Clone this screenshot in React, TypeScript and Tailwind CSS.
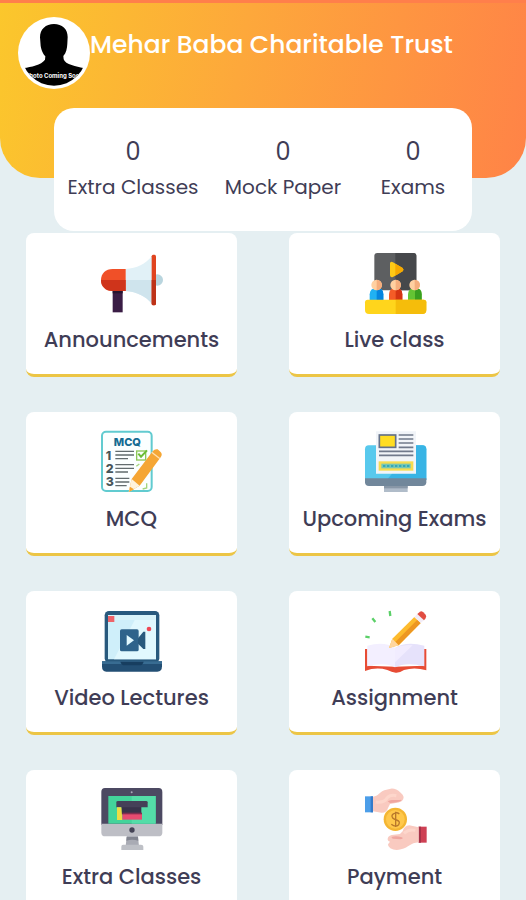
import type { ReactNode } from "react";

interface Stat {
  label: string;
  value: number;
}

interface MenuItem {
  title: string;
  icon: ReactNode;
}

const stats: Stat[] = [
  { label: "Extra Classes", value: 0 },
  { label: "Mock Paper", value: 0 },
  { label: "Exams", value: 0 },
];

function Icon({ children }: { children: ReactNode }) {
  return (
    <svg viewBox="30 30 192 192" className="h-16 w-16" aria-hidden="true">
      {children}
    </svg>
  );
}

function Avatar() {
  return (
    <svg viewBox="0 0 216 216" className="h-[72px] w-[72px]" aria-hidden="true">
      <defs>
        <clipPath id="avatar-clip">
          <circle cx="108" cy="108" r="98" />
        </clipPath>
      </defs>
      <g clipPath="url(#avatar-clip)">
        <path
          d="M108 21C83 21 66 37 66 61L68 87C71 104 77 112 82 118L81 128C70 144 38 150 18 153L0 216H216L196 153C177 149 141 143 137 127L136 117C145 107 147 95 148 80L149 60C149 36 132 21 108 21Z"
          fill="#000"
        />
        <text
          x="109"
          y="184"
          textAnchor="middle"
          fontFamily="Inter, sans-serif"
          fontSize="18"
          fontWeight="700"
          fill="#fff"
        >
          Photo Coming Soon
        </text>
      </g>
    </svg>
  );
}

function MegaphoneIcon() {
  return (
    <Icon>
      <path d="M68 146H98V214H68Z" fill="#3a1d45" />
      <path d="M68 146H98V157H68Z" fill="#26142f" />
      <circle cx="202" cy="117" r="17" fill="#b9d5de" />
      <path d="M107 84C140 82 167 69 186 45V189C168 166 140 153 107 150Z" fill="#e1f1f7" />
      <path d="M107 117H186V189C168 166 140 153 107 150Z" fill="#cfe4ed" />
      <path d="M107 84V150H68C46 150 33 136 33 117S47 84 68 84Z" fill="#f05028" />
      <path d="M33 117H107V150H68C46 150 33 136 33 117Z" fill="#cf341b" />
      <rect x="185" y="41" width="13" height="152" rx="5" fill="#e0441f" />
      <path d="M185 117H198V188Q198 193 191 193T185 188Z" fill="#bd3218" />
    </Icon>
  );
}

function LiveClassIcon() {
  return (
    <Icon>
      <rect x="64" y="36" width="126" height="112" rx="9" fill="#5d5f61" />
      <path d="M127 36H181Q190 36 190 45V148H127Z" fill="#46484b" />
      <path d="M111 67Q112 59 120 64L149 81Q154 86 149 91L120 108Q112 111 111 103Z" fill="#fdc916" />
      <path d="M127 68L149 81Q154 86 149 91L127 104Z" fill="#f5a800" />
      <path d="M50 181V160Q51 141 71 141T91 160V181Z" fill="#21b1f3" />
      <path d="M71 141Q91 141 91 160V181H71Z" fill="#0585df" />
      <path d="M108 181V160Q109 141 128 141T148 160V181Z" fill="#f45c27" />
      <path d="M128 141Q148 141 148 160V181H128Z" fill="#d53512" />
      <path d="M165 181V160Q166 141 186 141T206 160V181Z" fill="#64c433" />
      <path d="M186 141Q206 141 206 160V181H186Z" fill="#399f20" />
      <circle cx="71" cy="132" r="16" fill="#ffd0a1" />
      <circle cx="128" cy="132" r="16" fill="#ffd0a1" />
      <circle cx="185" cy="132" r="16" fill="#ffd0a1" />
      <path d="M71 116A16 16 0 0 1 71 148ZM128 116A16 16 0 0 1 128 148ZM185 116A16 16 0 0 1 185 148Z" fill="#f5ae7d" />
      <path d="M44 176H212Q220 176 220 184V207Q220 219 208 219H48Q36 219 36 207V184Q36 176 44 176Z" fill="#ffd51c" />
      <path d="M128 176H212Q220 176 220 184V207Q220 219 208 219H128Z" fill="#f5bd0b" />
    </Icon>
  );
}

function McqIcon() {
  return (
    <Icon>
      <rect x="36" y="35" width="149" height="178" rx="12" fill="#fbffff" stroke="#61cbd0" strokeWidth="6" />
      <g fontFamily="Inter, sans-serif" fontWeight="800">
        <text x="112" y="77" textAnchor="middle" fontSize="33" fill="#146b92">
          MCQ
        </text>
        <g fontSize="37" fill="#47565a">
          <text x="47" y="119">1</text>
          <text x="47" y="159">2</text>
          <text x="47" y="199">3</text>
        </g>
      </g>
      <path d="M76 94H132M76 105H132M76 116H114M76 134H132M76 145H132M76 156H114M76 175H118M76 186H118M76 197H110" stroke="#626c6e" strokeWidth="4" />
      <rect x="140" y="93" width="27" height="27" fill="none" stroke="#8dc758" strokeWidth="4" />
      <path d="M145 101L153 110L171 91" fill="none" stroke="#6bbd36" strokeWidth="6" />
      <path d="M139 139L148 132M158 207L170 204V190" fill="none" stroke="#a4d57d" strokeWidth="4" />
      <path d="M116 216L125 177L188 94Q194 86 203 88L211 95Q219 102 212 112L149 197Z" fill="#f5a634" />
      <path d="M116 216L125 177L149 197Z" fill="#fff3dc" />
      <path d="M117 216L120 200L132 208Z" fill="#f5a634" />
      <path d="M185 97L210 116" stroke="#ffe1af" strokeWidth="4" />
    </Icon>
  );
}

function ExamIcon() {
  return (
    <Icon>
      <path d="M93 197H164V216H93Z" fill="#b0bcc9" />
      <path d="M93 197H164V205H93Z" fill="#8897a7" />
      <path d="M47 76H208Q220 76 220 88V180H36V88Q36 76 47 76Z" fill="#58c9ed" />
      <path d="M190 76H208Q220 76 220 88V180H101Z" fill="#38b4e5" />
      <path d="M36 175H220V187Q220 198 208 198H48Q36 198 36 187Z" fill="#71879b" />
      <path d="M69 34H189V161H69Z" fill="#f1f4f8" />
      <rect x="79" y="45" width="49" height="37" fill="#ffdd22" stroke="#647188" strokeWidth="5" />
      <path d="M137 45H181M137 57H181M137 69H181M137 82H181M78 94H181M78 106H181" stroke="#70798b" strokeWidth="5" />
      <rect x="77" y="124" width="104" height="28" fill="#f7dc4f" />
      <rect x="85" y="131" width="88" height="14" fill="#76c7b4" />
      <path d="M90 138H169" stroke="#37a9b6" strokeWidth="6" strokeDasharray="7 5" />
    </Icon>
  );
}

function VideoIcon() {
  return (
    <Icon>
      <rect x="44" y="36" width="164" height="155" rx="13" fill="#28597d" />
      <path d="M54 48H198V181H54Z" fill="#cfeffa" />
      <path d="M142 48H198V181H72Z" fill="#e1f8fe" />
      <path d="M54 48H198V63H54Z" fill="#d8f3f9" />
      <path d="M54 51H73V69H54Z" fill="#ee6369" />
      <rect x="90" y="91" width="56" height="66" rx="5" fill="#2e638b" />
      <path d="M144 118L160 98H166V150H160L144 134Z" fill="#28597d" />
      <path d="M110 108L132 124L110 140Z" fill="#e1f9ff" />
      <circle cx="177" cy="90" r="7" fill="#ef4855" />
      <path d="M36 187H216V202Q216 218 202 218H49Q36 218 36 202Z" fill="#234f74" />
      <path d="M36 187H216V195H36Z" fill="#386c92" />
      <path d="M91 188H161Q158 199 149 199H104Q94 199 91 188Z" fill="#173e60" />
    </Icon>
  );
}

function AssignmentIcon() {
  return (
    <Icon>
      <path d="M36 150H43V200L126 203L213 200V150H220V214Q185 203 153 213Q140 222 128 221Q116 220 103 213Q70 203 36 216Z" fill="#e74c35" />
      <path d="M43 140Q95 126 126 147V205Q95 188 43 202Z" fill="#f3efff" />
      <path d="M126 147Q159 126 214 140V202Q160 188 126 205Z" fill="#e6e2fb" />
      <path d="M126 147Q150 136 179 139L126 190Z" fill="#f1ecff" />
      <path d="M108 147L118 119L184 54L203 72L137 139Z" fill="#fdbb2e" />
      <path d="M127 129L193 62L203 72L137 139Z" fill="#ed9722" />
      <path d="M108 147L118 119L137 139Z" fill="#ffd6a0" />
      <path d="M184 54L193 45L213 64L203 72Z" fill="#f2ecf6" />
      <path d="M193 45L201 38Q205 35 211 40L218 47Q222 52 217 59L213 64Z" fill="#e14d42" />
      <path d="M110 36L112 51M58 58L67 69M37 113L50 115" stroke="#5bd068" strokeWidth="7" />
    </Icon>
  );
}

function ExtraClassIcon() {
  return (
    <Icon>
      <path d="M111 168H143L147 205H107Z" fill="#a9abb4" />
      <path d="M110 177H144L145 188Q126 182 109 188Z" fill="#828590" />
      <path d="M99 200Q94 200 94 206V216H160V206Q160 200 153 200Z" fill="#bec0c6" />
      <path d="M45 30H206Q217 30 217 42V141H34V42Q34 30 45 30Z" fill="#4c4962" />
      <path d="M34 137H217V164Q217 175 205 175H46Q34 175 34 164Z" fill="#bdbec5" />
      <rect x="55" y="54" width="142" height="83" fill="#43d49b" />
      <path d="M125 54H197V137H125Z" fill="#54dda8" />
      <path d="M94 86H154V109H94Z" fill="#38334a" />
      <path d="M79 72Q79 69 84 69H168Q173 69 173 73V88H79Z" fill="#454158" />
      <path d="M81 88H94L97 126H81Z" fill="#eddc44" />
      <path d="M97 108H156V125H97Z" fill="#e74b70" />
      <path d="M97 104H156V109H97Z" fill="#812e50" />
      <circle cx="125" cy="43" r="3" fill="#aaa9b8" />
      <circle cx="126" cy="156" r="8" fill="#444355" />
    </Icon>
  );
}

function PaymentIcon() {
  return (
    <Icon>
      <path d="M36 55H60V103H36Z" fill="#4c9ee9" />
      <path d="M53 55H60V103H53Z" fill="#347bca" />
      <path d="M60 56C76 55 79 43 94 37L113 32Q128 30 143 44Q158 55 147 69Q139 75 124 76L111 78L105 90Q101 105 85 104L60 100Z" fill="#f9cac0" />
      <path d="M104 70C114 63 128 67 140 66Q150 64 142 70Q133 74 111 75" fill="#efa69f" />
      <path d="M68 72Q95 75 102 60Q112 49 130 53" fill="none" stroke="#fdd6cb" strokeWidth="9" />
      <circle cx="127" cy="124" r="35" fill="#f4b633" />
      <circle cx="127" cy="124" r="28" fill="#ffc84b" />
      <path d="M139 108Q132 102 124 106Q113 110 119 120Q123 124 131 126Q143 130 137 140Q128 149 115 139M128 101V147" fill="none" stroke="#b8782b" strokeWidth="4" />
      <path d="M197 146H221V194H197Z" fill="#ce4054" />
      <path d="M197 146H204V194H197Z" fill="#a63248" />
      <path d="M197 148L169 142Q153 143 149 160L141 168L116 171Q103 174 104 185Q105 189 111 191L105 199Q104 205 112 211Q126 219 144 214C169 208 171 195 197 193Z" fill="#f9cac0" />
      <path d="M115 177Q130 172 146 178Q154 181 143 184L119 182Z" fill="#efa69f" />
      <path d="M153 166Q167 152 187 157" fill="none" stroke="#fdd6cb" strokeWidth="9" />
    </Icon>
  );
}

const menuItems: MenuItem[] = [
  { title: "Announcements", icon: <MegaphoneIcon /> },
  { title: "Live class", icon: <LiveClassIcon /> },
  { title: "MCQ", icon: <McqIcon /> },
  { title: "Upcoming Exams", icon: <ExamIcon /> },
  { title: "Video Lectures", icon: <VideoIcon /> },
  { title: "Assignment", icon: <AssignmentIcon /> },
  { title: "Extra Classes", icon: <ExtraClassIcon /> },
  { title: "Payment", icon: <PaymentIcon /> },
];

export default function App() {
  return (
    <div className="min-h-screen bg-[#e5eff2] font-[Poppins,Inter,sans-serif] text-[#3f3d56]">
      {/* Header */}
      <header className="rounded-b-[40px] border-t-[3px] border-[#ff7f4b] bg-[linear-gradient(100deg,#fbc72c_0%,#fda83b_45%,#ff8347_100%)] px-[18px] pt-[14px] pb-[89px]">
        <div className="flex items-start">
          <div className="shrink-0 overflow-hidden rounded-full bg-white">
            <Avatar />
          </div>
          <h1 className="pt-3 text-[25px] leading-8 font-medium text-white">
            Mehar Baba Charitable Trust
          </h1>
        </div>
      </header>

      {/* Stats */}
      <section className="relative mx-[54px] -mt-[70px] grid grid-cols-[158fr_142fr_118fr] rounded-[20px] bg-white pt-7 pb-7 text-center">
        {stats.map((stat) => (
          <div key={stat.label}>
            <p className="text-2xl leading-8">{stat.value}</p>
            <p className="pt-[3px] text-[20px] leading-8 whitespace-nowrap">
              {stat.label}
            </p>
          </div>
        ))}
      </section>

      {/* Menu */}
      <main className="grid grid-cols-2 gap-x-[52px] gap-y-[35px] px-[26px] pt-[2px]">
        {menuItems.map((item) => (
          <button
            key={item.title}
            type="button"
            className="flex cursor-pointer flex-col items-center rounded-lg border-b-[3px] border-[#ecc545] bg-white pt-[18px] pb-[18px]"
          >
            {item.icon}
            <span className="pt-[9px] text-[21px] leading-8 font-medium whitespace-nowrap">
              {item.title}
            </span>
          </button>
        ))}
      </main>
    </div>
  );
}
